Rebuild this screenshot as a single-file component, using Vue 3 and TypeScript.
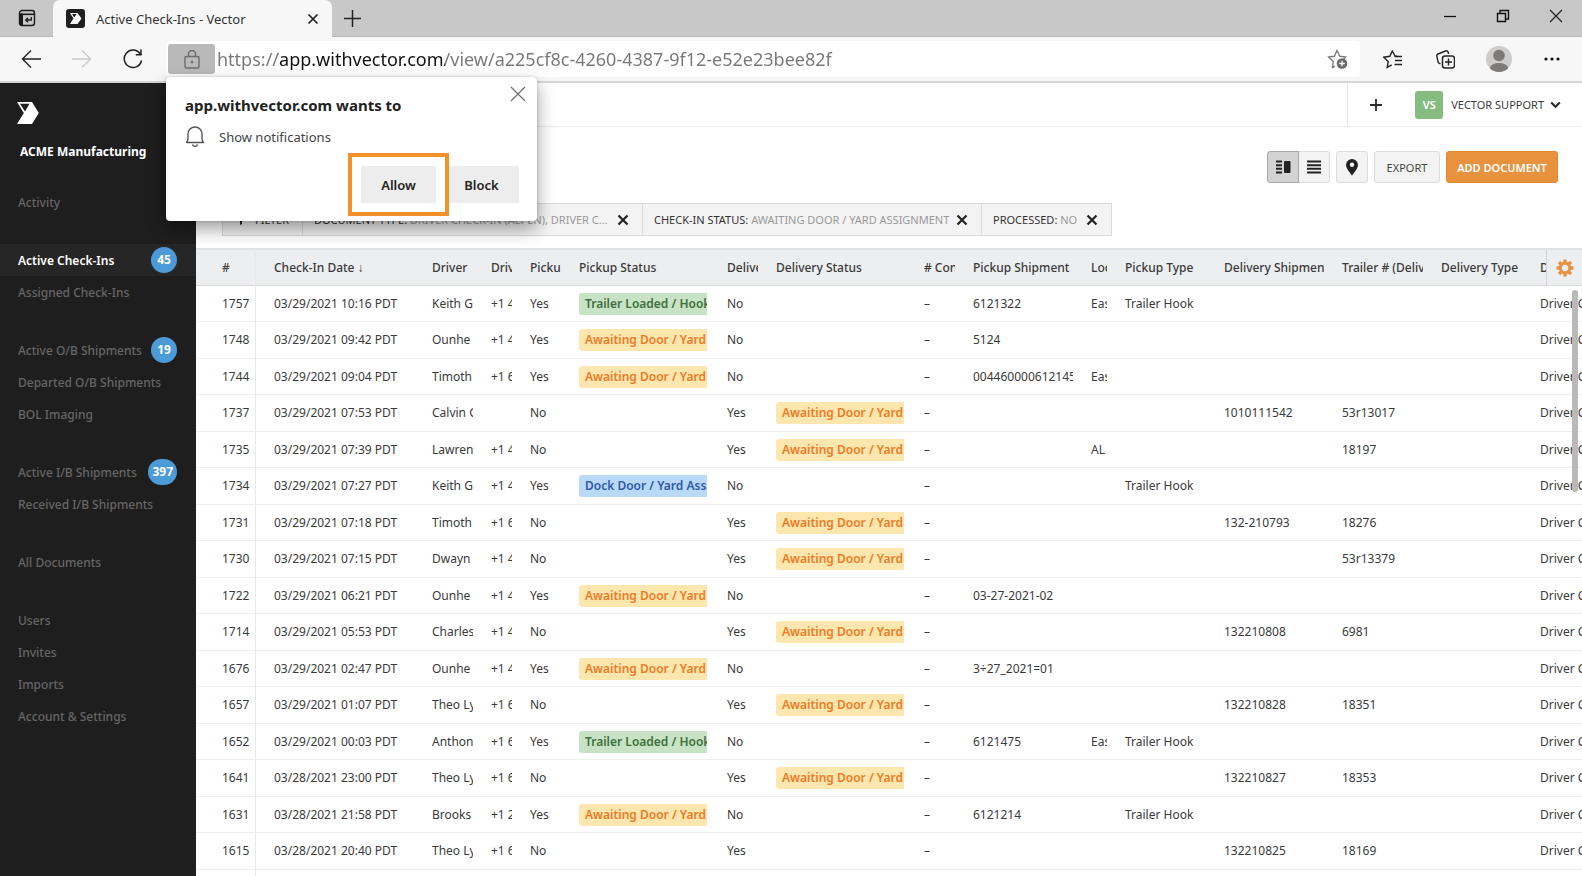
<script setup lang="ts">
import { ref } from 'vue'

interface NavItem { label: string; count?: number; active?: boolean }
interface CheckIn {
  id: string; date: string; driver: string; phone: string
  pickup: string; pickupStatus: string; delivery: string; deliveryStatus: string
  shipment: string; location: string; pickupType: string; deliveryShipment: string; trailer: string
}

const url = ref('https://app.withvector.com/view/a225cf8c-4260-4387-9f12-e52e23bee82f')

const nav: NavItem[][] = [
  [{ label: 'Activity' }],
  [{ label: 'Active Check-Ins', count: 45, active: true }, { label: 'Assigned Check-Ins' }],
  [{ label: 'Active O/B Shipments', count: 19 }, { label: 'Departed O/B Shipments' }, { label: 'BOL Imaging' }],
  [{ label: 'Active I/B Shipments', count: 397 }, { label: 'Received I/B Shipments' }],
  [{ label: 'All Documents' }],
  [{ label: 'Users' }, { label: 'Invites' }, { label: 'Imports' }, { label: 'Account & Settings' }],
]

const filters = [
  { name: 'Document Type:', value: 'Driver Check-In (Alpen), Driver C...', kind: 'by-type' },
  { name: 'Check-In Status:', value: 'Awaiting Door / Yard Assignment', kind: 'by-status' },
  { name: 'Processed:', value: 'No', kind: 'by-processed' },
]

const columns = [
  { title: '#', cls: 'c-id' }, { title: 'Check-In Date ↓', cls: 'c-date' },
  { title: 'Driver', cls: 'c-driver' }, { title: 'Driver', cls: 'c-phone' },
  { title: 'Pickup', cls: 'c-flag' }, { title: 'Pickup Status', cls: 'c-status' },
  { title: 'Delivery', cls: 'c-flag' }, { title: 'Delivery Status', cls: 'c-status' },
  { title: '# Cont', cls: 'c-flag' }, { title: 'Pickup Shipment', cls: 'c-ship' },
  { title: 'Loc', cls: 'c-loc' }, { title: 'Pickup Type', cls: 'c-type' },
  { title: 'Delivery Shipment', cls: 'c-ship' }, { title: 'Trailer # (Delivery)', cls: 'c-type' },
  { title: 'Delivery Type', cls: 'c-type' }, { title: 'Doc', cls: 'c-doc' },
]

const A = 'Awaiting Door / Yard'
const H = 'Trailer Loaded / Hook'
const D = 'Dock Door / Yard Ass'

function row(id: string, date: string, driver: string, phone: string, pickup: boolean, status: string,
  shipment = '', location = '', type = '', trailer = ''): CheckIn {
  return {
    id, date: `03/${date} PDT`, driver, phone,
    pickup: pickup ? 'Yes' : 'No', pickupStatus: pickup ? status : '',
    delivery: pickup ? 'No' : 'Yes', deliveryStatus: pickup ? '' : status,
    shipment: pickup ? shipment : '', location, pickupType: type,
    deliveryShipment: pickup ? '' : shipment, trailer,
  }
}

const rows: CheckIn[] = [
  row('1757', '29/2021 10:16', 'Keith G', '+1 4', true, H, '6121322', 'Eas', 'Trailer Hook'),
  row('1748', '29/2021 09:42', 'Ounhe', '+1 4', true, A, '5124'),
  row('1744', '29/2021 09:04', 'Timoth', '+1 6', true, A, '0044600006121453', 'Eas'),
  row('1737', '29/2021 07:53', 'Calvin G', '', false, A, '1010111542', '', '', '53r13017'),
  row('1735', '29/2021 07:39', 'Lawren', '+1 4', false, A, '', 'AL', '', '18197'),
  row('1734', '29/2021 07:27', 'Keith G', '+1 4', true, D, '', '', 'Trailer Hook'),
  row('1731', '29/2021 07:18', 'Timoth', '+1 6', false, A, '132-210793', '', '', '18276'),
  row('1730', '29/2021 07:15', 'Dwayn', '+1 4', false, A, '', '', '', '53r13379'),
  row('1722', '29/2021 06:21', 'Ounhe', '+1 4', true, A, '03-27-2021-02'),
  row('1714', '29/2021 05:53', 'Charles', '+1 4', false, A, '132210808', '', '', '6981'),
  row('1676', '29/2021 02:47', 'Ounhe', '+1 4', true, A, '3÷27_2021=01'),
  row('1657', '29/2021 01:07', 'Theo Ly', '+1 6', false, A, '132210828', '', '', '18351'),
  row('1652', '29/2021 00:03', 'Anthon', '+1 6', true, H, '6121475', 'Eas', 'Trailer Hook'),
  row('1641', '28/2021 23:00', 'Theo Ly', '+1 6', false, A, '132210827', '', '', '18353'),
  row('1631', '28/2021 21:58', 'Brooks', '+1 2', true, A, '6121214', '', 'Trailer Hook'),
  row('1615', '28/2021 20:40', 'Theo Ly', '+1 6', false, '', '132210825', '', '', '18169'),
]

const tone = (s: string) => (s === H ? 'green' : s === D ? 'blue' : 'amber')
</script>

<template>
  <div class="browser">
    <header class="tabs">
      <button class="bare tab-actions" aria-label="Tab actions">
        <svg width="18" height="18" viewBox="0 0 18 18"><rect x="1.5" y="1.5" width="15" height="15" rx="2.5" fill="none" stroke="#1b1b1b" stroke-width="1.4" /><path d="M1.500 4.500H5v12H3a1.500 1.500 0 0 1-1.500-1.500z" fill="#1b1b1b" /><path d="M1.500 5.300h15" stroke="#1b1b1b" stroke-width="1.600" /><path d="M13.300 8v3H7.800M10 8.700 7.700 11l2.300 2.300" fill="none" stroke="#1b1b1b" stroke-width="1.300" /></svg>
      </button>
      <div class="tab">
        <svg width="19" height="19" viewBox="0 0 19 19"><rect width="19" height="19" rx="3" fill="#1f1f1f" /><path d="M4 4h7.500l4 5.500-4 5.500H4l3.500-5.500z" fill="#fff" /><path d="M6 5h4.500L8.300 8.500z" fill="#1f1f1f" /></svg>
        <span class="tab-title">Active Check-Ins - Vector</span>
        <button class="bare" aria-label="Close tab"><svg width="12" height="12" viewBox="0 0 12 12"><path d="M1.500 1.500l9 9M10.500 1.500l-9 9" stroke="#222" stroke-width="1.700" /></svg></button>
      </div>
      <button class="bare new-tab" aria-label="New tab"><svg width="17" height="17" viewBox="0 0 17 17"><path d="M8.500 0v17M0 8.500h17" stroke="#222" stroke-width="1.500" /></svg></button>
      <div class="window-controls">
        <button class="bare" aria-label="Minimize"><svg width="14" height="14" viewBox="0 0 14 14"><path d="M1 7.500h12" stroke="#111" stroke-width="1.300" /></svg></button>
        <button class="bare" aria-label="Restore"><svg width="14" height="14" viewBox="0 0 14 14"><path d="M1.500 4.500h8v8h-8zM4 4V1.500h8.500V10H10" fill="none" stroke="#111" stroke-width="1.400" /></svg></button>
        <button class="bare" aria-label="Close"><svg width="14" height="14" viewBox="0 0 14 14"><path d="M1 1l12 12M13 1L1 13" stroke="#222" stroke-width="1.300" /></svg></button>
      </div>
    </header>

    <div class="toolbar">
      <div class="history">
        <button class="bare" aria-label="Back"><svg width="20" height="20" viewBox="0 0 20 20"><path d="M20 10H2M10 1.500 1.500 10l8.500 8.500" fill="none" stroke="#222" stroke-width="1.400" /></svg></button>
        <button class="bare" aria-label="Forward" disabled><svg width="20" height="20" viewBox="0 0 20 20"><path d="M0 10h18M10 1.500l8.500 8.500-8.500 8.500" fill="none" stroke="#cacaca" stroke-width="1.400" /></svg></button>
        <button class="bare" aria-label="Refresh"><svg width="20" height="20" viewBox="0 0 20 20"><path d="M18.500 11.500A8.700 8.700 0 1 1 17 4.700M18 .5v5.200h-5.200" fill="none" stroke="#222" stroke-width="1.500" /></svg></button>
      </div>
      <div class="address">
        <button class="lock" aria-label="Site information"><svg width="16" height="19" viewBox="0 0 16 19"><rect x="1" y="6.500" width="14" height="11.500" rx="1.500" fill="none" stroke="#6b6b6b" stroke-width="1.400" /><path d="M4.500 6.500V4a3.500 3.500 0 0 1 7 0v2.500" fill="none" stroke="#6b6b6b" stroke-width="1.400" /><circle cx="8" cy="12" r="1.300" fill="#6b6b6b" /></svg></button>
        <input v-model="url" class="url" aria-label="Address" spellcheck="false" />
        <button class="bare fav" aria-label="Add to favorites"><svg width="21" height="20" viewBox="0 0 21 20"><path d="M8 17.200 5.500 18.500l.8-6L1.500 8l6-.900L10 1.500l2.700 5.600 6 .9-2 2" fill="none" stroke="#767676" stroke-width="1.300" /><circle cx="15" cy="14.500" r="5.300" fill="#6a6a6a" /><path d="M15 11.700v5.600M12.200 14.500h5.600" stroke="#fff" stroke-width="1.300" /></svg></button>
      </div>
      <div class="tools">
        <button class="bare" aria-label="Favorites"><svg width="20" height="19" viewBox="0 0 20 19"><path d="M14.500 6.500 12 6 9.300 1 6.800 6.300l-6 .9 4.400 4.200-1 6 4.500-2.500" fill="none" stroke="#222" stroke-width="1.400" /><path d="M11.500 6.500H19M12 10.500h7M11.500 14.500H19" stroke="#222" stroke-width="1.400" /></svg></button>
        <button class="bare" aria-label="Collections"><svg width="19" height="19" viewBox="0 0 19 19"><path d="M4.500 14 3 13.200a2 2 0 0 1-1-1.500L.9 6.400A2 2 0 0 1 2 4l7.500-3a2 2 0 0 1 2.600 1l.5 2" fill="none" stroke="#222" stroke-width="1.400" /><rect x="6.500" y="6" width="12" height="12" rx="2.500" fill="none" stroke="#222" stroke-width="1.500" /><path d="M12.500 8.500v7M9 12h7" stroke="#222" stroke-width="1.500" /></svg></button>
        <button class="bare" aria-label="Profile"><svg width="26" height="26" viewBox="0 0 26 26"><clipPath id="face"><circle cx="13" cy="13" r="13" /></clipPath><circle cx="13" cy="13" r="13" fill="#cfcdcb" /><circle cx="13" cy="9.500" r="5.800" fill="#7d7b7a" /><ellipse cx="13" cy="22" rx="9" ry="5" fill="#7d7b7a" clip-path="url(#face)" /></svg></button>
        <button class="bare" aria-label="More"><svg width="16" height="4" viewBox="0 0 16 4"><circle cx="2" cy="2" r="1.600" fill="#111" /><circle cx="8" cy="2" r="1.600" fill="#111" /><circle cx="14" cy="2" r="1.600" fill="#111" /></svg></button>
      </div>

      <div class="prompt" role="dialog" aria-labelledby="prompt-title">
        <h2 id="prompt-title">app.withvector.com wants to</h2>
        <button class="bare dismiss" aria-label="Dismiss"><svg width="16" height="16" viewBox="0 0 16 16"><path d="M1 1l14 14M15 1L1 15" stroke="#6b6b6b" stroke-width="1.200" /></svg></button>
        <p><svg width="20" height="22" viewBox="0 0 20 22"><path d="M1.500 16.500c1.500-1.500 1.500-2.500 1.500-4V8a7 7 0 0 1 14 0v4.500c0 1.500 0 2.500 1.500 4zM7.500 18.500a2.600 2.600 0 0 0 5 0" fill="none" stroke="#555" stroke-width="1.400" stroke-linejoin="round" /></svg>Show notifications</p>
        <div class="prompt-actions">
          <span class="highlight"><button>Allow</button></span>
          <button>Block</button>
        </div>
      </div>
    </div>

    <div class="app">
      <aside class="sidebar">
        <svg class="logo" width="22" height="22" viewBox="0 0 22 22"><path d="M0 0h15l6.800 11L15 22H0l6.800-11z" fill="#fff" /><path d="M3 1.700h9.500L8 9.500z" fill="#1e1e1e" /></svg>
        <strong class="org">ACME Manufacturing</strong>
        <nav>
          <ul v-for="(group, g) in nav" :key="g">
            <li v-for="item in group" :key="item.label">
              <a href="#" :class="{ active: item.active }">{{ item.label }}<span v-if="item.count" class="count">{{ item.count }}</span></a>
            </li>
          </ul>
        </nav>
      </aside>

      <main class="main">
        <div class="topbar">
          <div class="account">
            <button class="bare add" aria-label="Add"><svg width="12" height="12" viewBox="0 0 12 12"><path d="M6 0v12M0 6h12" stroke="#2b2b2b" stroke-width="1.800" /></svg></button>
            <button class="bare user"><span class="avatar">VS</span>Vector Support<svg width="11" height="8" viewBox="0 0 11 8"><path d="M1.200 1.500l4.300 4.200 4.300-4.200" fill="none" stroke="#2b2b2b" stroke-width="2.200" /></svg></button>
          </div>
        </div>

        <div class="actions">
          <div class="toggle">
            <button class="on" aria-label="Split view"><svg width="15" height="14" viewBox="0 0 15 14"><path d="M0 1.500h6M0 5.200h6M0 8.800h6M0 12.500h6" stroke="#222" stroke-width="2" /><rect x="8" y="1" width="6.500" height="12" rx="1" fill="#222" /></svg></button>
            <button aria-label="List view"><svg width="14" height="14" viewBox="0 0 14 14"><path d="M0 1.500h14M0 5.200h14M0 8.800h14M0 12.500h14" stroke="#222" stroke-width="1.900" /></svg></button>
          </div>
          <button class="square" aria-label="Map"><svg width="12" height="17" viewBox="0 0 12 17"><path d="M6 0a6 6 0 0 1 6 6c0 3-3 6.500-6 10.500C3 12.500 0 9 0 6a6 6 0 0 1 6-6z" fill="#222" /><circle cx="6" cy="5.800" r="2.200" fill="#f3f3f3" /></svg></button>
          <button class="text">Export</button>
          <button class="primary">Add Document</button>
        </div>

        <div class="filters">
          <button class="filter-toggle"><svg width="10" height="10" viewBox="0 0 10 10"><path d="M0 0h10L6 5v4L4 10V5z" fill="#222" /></svg>Filter</button>
          <div v-for="f in filters" :key="f.name" class="chip" :class="f.kind">
            <span>{{ f.name }} <em>{{ f.value }}</em></span>
            <button class="bare" :aria-label="'Remove ' + f.name"><svg width="12" height="12" viewBox="0 0 12 12"><path d="M1.500 1.500l9 9M10.500 1.500l-9 9" stroke="#222" stroke-width="2.200" /></svg></button>
          </div>
        </div>

        <div class="grid">
          <table>
            <thead>
              <tr><th v-for="(c, i) in columns" :key="i" :class="c.cls" scope="col">{{ c.title }}</th></tr>
            </thead>
            <tbody>
              <tr v-for="r in rows" :key="r.id">
                <td>{{ r.id }}</td>
                <td>{{ r.date }}</td>
                <td>{{ r.driver }}</td>
                <td>{{ r.phone }}</td>
                <td>{{ r.pickup }}</td>
                <td><span v-if="r.pickupStatus" class="status" :class="tone(r.pickupStatus)">{{ r.pickupStatus }}</span></td>
                <td>{{ r.delivery }}</td>
                <td><span v-if="r.deliveryStatus" class="status" :class="tone(r.deliveryStatus)">{{ r.deliveryStatus }}</span></td>
                <td>–</td>
                <td>{{ r.shipment }}</td>
                <td>{{ r.location }}</td>
                <td>{{ r.pickupType }}</td>
                <td>{{ r.deliveryShipment }}</td>
                <td>{{ r.trailer }}</td>
                <td></td>
                <td>Driver C</td>
              </tr>
              <tr><td v-for="(c, i) in columns" :key="i"></td></tr>
            </tbody>
          </table>
          <button class="bare gear" aria-label="Table settings">
            <svg width="18" height="18" viewBox="-9 -9 18 18"><g fill="#e8923e"><rect v-for="a in 8" :key="a" x="-1.700" y="-8.500" width="3.400" height="5" rx=".6" :transform="`rotate(${a * 45})`" /></g><circle r="4.800" fill="none" stroke="#e8923e" stroke-width="2.800" /></svg>
          </button>
          <div class="thumb"></div>
        </div>
      </main>
    </div>
  </div>
</template>

<style>
body { margin: 0; }
</style>

<style scoped>
* { box-sizing: border-box; }
.browser {
  height: 100vh; display: flex; flex-direction: column; overflow: hidden;
  font-family: "Noto Sans", "Open Sans", sans-serif; font-size: 12px; color: #3a3a3a; background: #fff;
}
button { font: inherit; color: inherit; text-transform: inherit; margin: 0; padding: 0; border: 0; cursor: pointer; display: flex; align-items: center; justify-content: center; }
.bare { background: none; }
svg { display: block; flex: none; }

.tabs { flex: none; height: 37px; display: flex; align-items: stretch; background: #c8c8c8; border-bottom: 1px solid #b9b9b9; }
.tab-actions { width: 53px; }
.tab { width: 279px; height: 37px; display: flex; align-items: center; gap: 11px; padding: 0 13px; background: #f7f7f7; border-radius: 7px 7px 0 0; }
.tab-title { flex: 1; font-size: 13px; color: #333; white-space: nowrap; }
.new-tab { width: 40px; }
.window-controls { margin-left: auto; display: flex; padding-bottom: 4px; }
.window-controls button { width: 53px; }

.toolbar { position: relative; z-index: 2; flex: none; height: 46px; padding: 5px 0; display: flex; align-items: center; background: #f7f7f7; border-bottom: 2px solid #d6d6d6; }
.history { width: 166px; padding-left: 21px; display: flex; gap: 31px; }
.address { flex: 1; height: 36px; display: flex; align-items: center; padding-left: 2px; background: #fff; border-radius: 4px; }
.lock { width: 47px; height: 30px; background: #b9b9b9; border-radius: 3px; }
.url {
  flex: 1; min-width: 0; margin: 0; padding: 0 0 0 2px; border: 0; outline: 0; font: inherit; font-size: 18px; line-height: 30px; color: transparent;
  background: linear-gradient(90deg, #777 0 63px, #111 63px 230px, #777 230px); background-clip: text; -webkit-background-clip: text;
}
.fav { width: 45px; }
.tools { width: 222px; padding: 0 4px 0 6px; display: flex; }
.tools button { flex: 1; height: 34px; }

.prompt { position: absolute; left: 166px; top: 40px; width: 371px; height: 144px; padding: 17px 18px 0 19px; background: #fff; border-radius: 4px; box-shadow: 0 8px 18px rgba(0, 0, 0, .38), 0 0 3px rgba(0, 0, 0, .2); }
.prompt h2 { margin: 0; font-size: 15px; line-height: 22px; font-weight: 700; color: #222; }
.dismiss { position: absolute; right: 11px; top: 9px; }
.prompt p { margin: 10px 0 0; display: flex; align-items: center; gap: 14px; font-size: 13px; line-height: 22px; color: #444; }
.prompt-actions { display: flex; justify-content: flex-end; align-items: center; margin-top: 5px; }
.highlight { position: relative; z-index: 1; margin-right: -5px; padding: 9px; border: 4px solid #f3922b; background: #fff; }
.prompt-actions button { width: 75px; height: 37px; font-size: 13px; font-weight: 600; color: #222; background: #ededed; border-radius: 2px; }

.app { flex: 1; min-height: 0; display: flex; }
.sidebar { flex: none; width: 196px; background: #1e1e1e; color: #fff; }
.logo { margin: 19px 0 16px 17px; }
.org { display: block; margin-left: 20px; font-size: 12px; line-height: 24px; font-weight: 700; }
nav { padding-top: 22px; display: flex; flex-direction: column; gap: 26px; }
ul { list-style: none; margin: 0; padding: 0; }
nav a { height: 32px; padding: 0 19px 0 18px; display: flex; align-items: center; justify-content: space-between; white-space: nowrap; font-weight: 500; color: #666; text-decoration: none; }
nav a.active { background: #262626; color: #fff; font-weight: 600; }
.count { min-width: 26px; height: 26px; padding: 0 4px; border-radius: 13px; background: #4b9bd8; color: #fff; font-weight: 700; line-height: 26px; text-align: center; }

.main { flex: 1; min-width: 0; display: flex; flex-direction: column; }
.topbar { flex: none; height: 44px; display: flex; justify-content: flex-end; border-bottom: 1px solid #ebebeb; }
.account { display: flex; border-left: 1px solid #e6e6e6; padding-right: 21px; font-size: 11px; text-transform: uppercase; }
.add { width: 55px; }
.user { margin-left: 12px; gap: 6px; }
.avatar { width: 28px; height: 28px; margin-right: 2px; border-radius: 3px; background: #86bc80; color: #fff; font-weight: 600; line-height: 28px; }
.actions { flex: none; display: flex; justify-content: flex-end; gap: 6px; padding: 24px 24px 0 0; font-size: 11px; text-transform: uppercase; }
.actions button { height: 32px; background: #f3f3f3; border: 1px solid #dcdcdc; border-radius: 3px; }
.toggle { display: flex; }
.actions .toggle button { width: 31px; border-radius: 0 3px 3px 0; border-left: 0; }
.actions .toggle .on { width: 32px; background: #d3d3d3; border: 1px solid #a8a8a8; border-radius: 3px 0 0 3px; }
.actions .square { width: 32px; }
.actions .text { width: 66px; color: #444; }
.actions .primary { width: 112px; font-weight: 600; color: #fff; background: #e8923e; border-color: #df8832; }

.filters { flex: none; align-self: flex-start; height: 33px; margin: 20px 0 12px 26px; display: flex; background: #f3f3f3; border: 1px solid #d9d9d9; font-size: 11px; text-transform: uppercase; color: #333; }
.filter-toggle { width: 79px; gap: 9px; background: none; }
.chip { display: flex; align-items: center; justify-content: space-between; padding: 0 13px 0 11px; border-left: 1px solid #d9d9d9; white-space: nowrap; }
.by-type { width: 340px; }
.by-status { width: 339px; }
.by-processed { width: 130px; }
.chip em { font-style: normal; color: #999; }

.grid { position: relative; flex: 1; min-height: 0; overflow: hidden; }
table { width: 100%; table-layout: fixed; border-collapse: separate; border-spacing: 0; }
th, td { height: 36px; padding: 0 2px 0 18px; border-bottom: 1px solid #efefef; text-align: left; white-space: nowrap; overflow: hidden; font-weight: 400; line-height: 18px; }
tbody tr:nth-child(even) td { height: 37px; }
th { height: 38px; background: #edeef0; border-top: 2px solid #e2e2e2; border-bottom-color: #dadada; font-weight: 500; }
th:first-child, td:first-child { padding-left: 26px; border-right: 1px solid #e9e9e9; }
td:last-child { padding-right: 0; }
.c-id { width: 60px; }
.c-date { width: 158px; }
.c-driver { width: 59px; }
.c-phone { width: 39px; }
.c-flag { width: 49px; }
.c-status { width: 148px; }
.c-ship { width: 118px; }
.c-loc { width: 34px; }
.c-type { width: 99px; }
.status { display: block; height: 22px; padding-left: 6px; border-radius: 3px 0 0 3px; line-height: 21px; font-weight: 600; overflow: hidden; }
.amber { background: #fde7ae; color: #f07a24; }
.green { background: #c7e2c5; color: #416f3c; }
.blue { background: #b8d9f8; color: #2f58a8; }
.gear { position: absolute; right: 0; top: 2px; width: 36px; height: 35px; background: #edeef0; border-left: 1px solid #d3d3d3; }
.thumb { position: absolute; right: 4px; top: 42px; width: 6px; height: 202px; border-radius: 3px; background: #b9b9b9; }
</style>
